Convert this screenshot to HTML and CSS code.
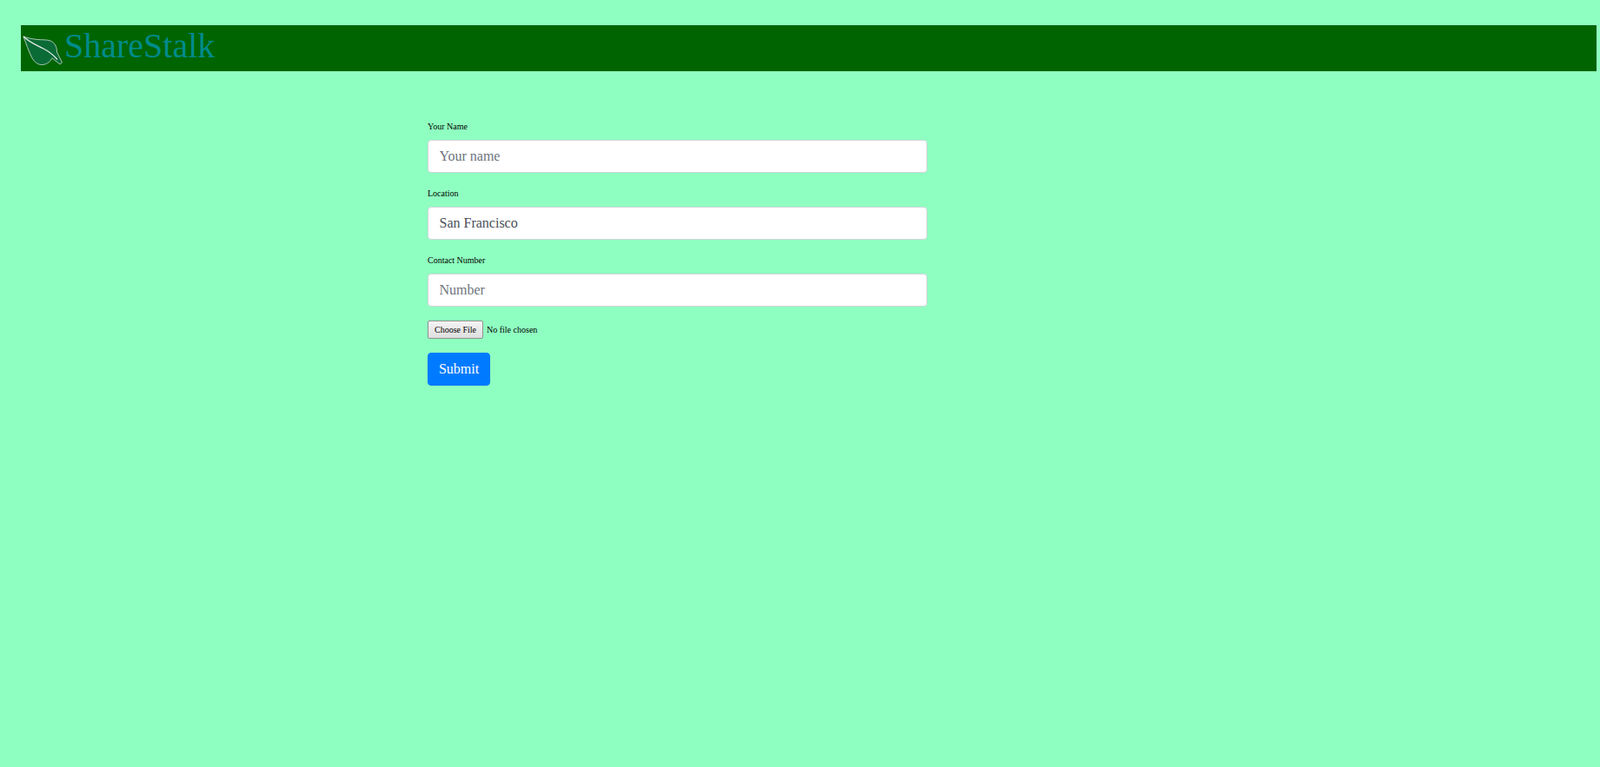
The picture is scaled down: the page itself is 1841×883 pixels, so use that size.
FILE: index.html
```html
<!DOCTYPE html>
<html lang="en">
<head>
  <meta charset="UTF-8">
  <title>ShareStalk</title>
  <link rel="stylesheet" href="styles.css">
</head>
<body>
  <!-- Header -->
  <div class="header">
    <svg class="logo" viewBox="0 0 46 36" width="46" height="36">
      <path class="leaf" d="M1 1 C6 3 12 4 17 4.5 C23 5 28 4.5 32 6 C37 8 39.5 13 39.5 19 L45.5 31 L43 33 L34 26 C31 31 27 33.5 22 33.5 C17 33.5 13 30 10 24 C7 18 4 9 1 1 Z"/>
      <path class="vein" d="M1 1 C8 8 16 11 24 15 C30 18 35 22 40 27.5"/>
    </svg>
    <span class="brand">ShareStalk</span>
  </div>

  <!-- Form -->
  <form class="share-form">
    <div class="form-group">
      <label for="name">Your Name</label>
      <input type="text" id="name" class="form-control" placeholder="Your name">
    </div>
    <div class="form-group">
      <label for="location">Location</label>
      <input type="text" id="location" class="form-control" value="San Francisco">
    </div>
    <div class="form-group">
      <label for="number">Contact Number</label>
      <input type="text" id="number" class="form-control" placeholder="Number">
    </div>
    <div class="form-group">
      <input type="file" id="photo" class="file-input">
    </div>
    <button type="submit" class="btn-submit">Submit</button>
  </form>
</body>
</html>
```

FILE: styles.css
```css
* {
  box-sizing: border-box;
}
body {
  margin: 0;
  padding: 29px 4px 0 24px;
  min-height: 100vh;
  background-color: #8fffc1;
  font-family: 'Liberation Serif', serif;
  font-size: 10px;
  line-height: 15px;
  color: #000;
}
.header {
  display: flex;
  align-items: center;
  height: 53px;
  background-color: #006400;
  padding-left: 2px;
}
.logo {
  flex: none;
  margin-top: 6px;
}
.leaf {
  fill: #0b6b37;
  stroke: #b9d0c1;
  stroke-width: 0.9;
}
.vein {
  fill: none;
  stroke: #e6efe9;
  stroke-width: 1.2;
}
.brand {
  margin: -6px 0 0 2px;
  font-size: 40px;
  line-height: 46px;
  color: #008b8b;
}
.share-form {
  width: 575px;
  margin: 56px 0 0 468px;
}
.form-group {
  margin-bottom: 16px;
}
.form-group label {
  display: block;
  margin-bottom: 8px;
}
.form-control {
  display: block;
  width: 100%;
  height: 38px;
  padding: 6px 12.5px;
  font-family: inherit;
  font-size: 16px;
  line-height: 1.5;
  color: #495057;
  background-color: #fff;
  border: 1px solid #ced4da;
  border-radius: 4px;
}
.form-control::placeholder {
  color: #6c757d;
}
.file-input {
  display: block;
  height: 21px;
  font-family: inherit;
  font-size: 10px;
}
.file-input::file-selector-button {
  width: 64px;
  height: 21px;
  margin-right: 4px;
  padding: 0;
  font-family: inherit;
  font-size: 10px;
  color: #000;
  background: linear-gradient(#f4f4f4, #dedede);
  border: 1px solid #8f8f8f;
  border-radius: 2px;
}
.btn-submit {
  display: block;
  width: 72px;
  padding: 6px 0;
  font-family: inherit;
  font-size: 16px;
  line-height: 1.5;
  color: #fff;
  background-color: #007bff;
  border: 1px solid #007bff;
  border-radius: 4px;
}
```
